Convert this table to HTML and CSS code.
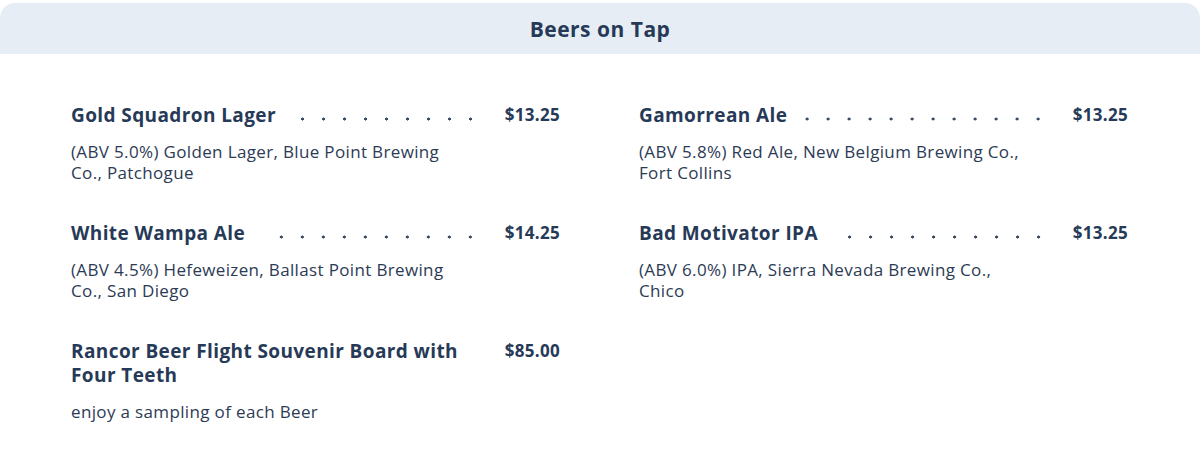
FILE: index.html
```html
<!DOCTYPE html>
<html lang="en">
<head>
<meta charset="utf-8">
<title>Beers on Tap</title>
<link rel="stylesheet" href="styles.css">
</head>
<body>
<section class="menu">
  <header class="menu-header">
    <h1 class="menu-title">Beers on Tap</h1>
  </header>
  <div class="menu-grid">
    <article class="item">
      <div class="item-head">
        <h2 class="item-name">Gold Squadron Lager</h2>
        <span class="leader"></span>
        <span class="price">$13.25</span>
      </div>
      <p class="item-desc">(ABV 5.0%) Golden Lager, Blue Point Brewing Co., Patchogue</p>
    </article>
    <article class="item">
      <div class="item-head">
        <h2 class="item-name">Gamorrean Ale</h2>
        <span class="leader"></span>
        <span class="price">$13.25</span>
      </div>
      <p class="item-desc">(ABV 5.8%) Red Ale, New Belgium Brewing Co., Fort Collins</p>
    </article>
    <article class="item">
      <div class="item-head">
        <h2 class="item-name">White Wampa Ale</h2>
        <span class="leader"></span>
        <span class="price">$14.25</span>
      </div>
      <p class="item-desc">(ABV 4.5%) Hefeweizen, Ballast Point Brewing Co., San Diego</p>
    </article>
    <article class="item">
      <div class="item-head">
        <h2 class="item-name">Bad Motivator IPA</h2>
        <span class="leader"></span>
        <span class="price">$13.25</span>
      </div>
      <p class="item-desc">(ABV 6.0%) IPA, Sierra Nevada Brewing Co., Chico</p>
    </article>
    <article class="item">
      <div class="item-head">
        <h2 class="item-name">Rancor Beer Flight Souvenir Board with Four Teeth</h2>
        <span class="leader"></span>
        <span class="price">$85.00</span>
      </div>
      <p class="item-desc">enjoy a sampling of each Beer</p>
    </article>
  </div>
</section>
</body>
</html>
```
FILE: styles.css
```css
* {
  box-sizing: border-box;
}

html, body {
  margin: 0;
  padding: 0;
  background: #ffffff;
}

body {
  font-family: "Open Sans", Lato, "Liberation Sans", sans-serif;
  color: #263a58;
}

.menu {
  padding-top: 3px;
}

.menu-header {
  height: 51px;
  background: #e6edf5;
  border-radius: 15px 15px 0 0;
  display: flex;
  align-items: center;
  justify-content: center;
}

.menu-title {
  margin: 0;
  font-size: 21px;
  font-weight: 700;
  letter-spacing: 0.5px;
  line-height: 24px;
  color: #263a58;
}

.menu-grid {
  display: grid;
  grid-template-columns: 489px 489px;
  column-gap: 79px;
  row-gap: 38px;
  padding: 49px 0 0 71px;
}

.item-head {
  display: flex;
  align-items: flex-start;
}

.item-name {
  margin: 0;
  flex: 0 1 auto;
  max-width: 405px;
  font-size: 19px;
  font-weight: 700;
  letter-spacing: 0.4px;
  line-height: 24px;
  color: #263a58;
}

.leader {
  flex: 1 1 0;
  min-width: 0;
  height: 24px;
  margin: 0 20px 0 18px;
  background-image: radial-gradient(circle, #3a4a63 1.3px, transparent 1.8px);
  background-size: 21px 6px;
  background-repeat: repeat-x;
  background-position: right 0 top 13px;
}

.price {
  flex: 0 0 auto;
  width: 59px;
  text-align: right;
  font-size: 17px;
  font-weight: 700;
  letter-spacing: 0.3px;
  line-height: 24px;
  color: #263a58;
}

.item-desc {
  margin: 14px 0 0;
  max-width: 395px;
  font-size: 17px;
  font-weight: 400;
  letter-spacing: 0.35px;
  line-height: 21px;
  color: #2c3b55;
}
```
